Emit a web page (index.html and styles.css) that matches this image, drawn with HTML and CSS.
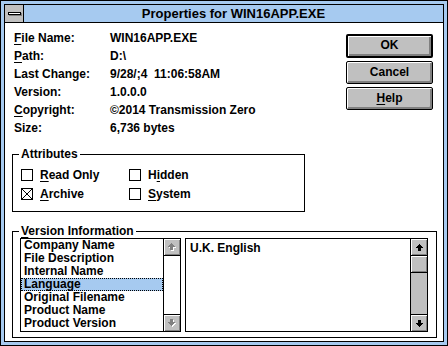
FILE: index.html
```html
<!DOCTYPE html>
<html lang="en">
<head>
    <meta charset="UTF-8">
    <title>Properties for WIN16APP.EXE</title>
    <link rel="stylesheet" href="styles.css">
</head>
<body>
    <div class="window">
        <div class="frame">
            <!-- caption -->
            <div class="titlebar">
                <div class="sysmenu"><span class="sysbar"></span></div>
                <div class="title">Properties for WIN16APP.EXE</div>
            </div>

            <div class="client">
                <div class="top">
                    <div class="info">
                        <span><u>F</u>ile Name:</span><span>WIN16APP.EXE</span>
                        <span><u>P</u>ath:</span><span>D:\</span>
                        <span>Last Change:</span><span>9/28/;4&nbsp;&nbsp;11:06:58AM</span>
                        <span>Version:</span><span>1.0.0.0</span>
                        <span><u>C</u>opyright:</span><span>&copy;2014 Transmission Zero</span>
                        <span>Size:</span><span>6,736 bytes</span>
                    </div>
                    <div class="buttons">
                        <div class="btn default">OK</div>
                        <div class="btn">Cancel</div>
                        <div class="btn"><u>H</u>elp</div>
                    </div>
                </div>

                <div class="group attributes">
                    <span class="group-label">Attributes</span>
                    <div class="checks">
                        <div class="check"><span class="box"></span><span><u>R</u>ead Only</span></div>
                        <div class="check"><span class="box"></span><span>H<u>i</u>dden</span></div>
                        <div class="check">
                            <span class="box">
                                <svg width="10" height="10" viewBox="0 0 10 10"><path d="M0 0L10 10M10 0L0 10" stroke="#000" stroke-width="1"/></svg>
                            </span><span><u>A</u>rchive</span>
                        </div>
                        <div class="check"><span class="box"></span><span><u>S</u>ystem</span></div>
                    </div>
                </div>

                <div class="group version">
                    <span class="group-label"><u>V</u>ersion Information</span>
                    <div class="lists">
                        <div class="listbox names">
                            <ul class="items">
                                <li>Company Name</li>
                                <li>File Description</li>
                                <li>Internal Name</li>
                                <li class="selected">Language</li>
                                <li>Original Filename</li>
                                <li>Product Name</li>
                                <li>Product Version</li>
                            </ul>
                            <div class="scrollbar off">
                                <div class="arrow">
                                    <svg width="8" height="8" viewBox="0 0 8 8"><path class="shade" d="M4 1h1v1h1v1h1v1h1v1H6v3H3V5H1V4h1V3h1V2h1z"/><path class="glyph" d="M3 0h1v1h1v1h1v1h1v1H5v3H2V4H0V3h1V2h1V1h1z"/></svg>
                                </div>
                                <div class="track"></div>
                                <div class="arrow">
                                    <svg width="8" height="8" viewBox="0 0 8 8"><path class="shade" d="M3 1h3v3h2v1H7v1H6v1H5v1H4V7H3V6H2V5H1V4h2z"/><path class="glyph" d="M2 0h3v3h2v1H6v1H5v1H4v1H3V6H2V5H1V4H0V3h2z"/></svg>
                                </div>
                            </div>
                        </div>
                        <div class="listbox value">
                            <div class="value-text">U.K. English</div>
                            <div class="scrollbar">
                                <div class="arrow">
                                    <svg width="7" height="7" viewBox="0 0 7 7"><path d="M3 0h1v1h1v1h1v1h1v1H5v3H2V4H0V3h1V2h1V1h1z"/></svg>
                                </div>
                                <div class="thumb"></div>
                                <div class="track grey"></div>
                                <div class="arrow">
                                    <svg width="7" height="7" viewBox="0 0 7 7"><path d="M2 0h3v3h2v1H6v1H5v1H4v1H3V6H2V5H1V4H0V3h2z"/></svg>
                                </div>
                            </div>
                        </div>
                    </div>
                </div>
            </div>
        </div>
    </div>
</body>
</html>
```

FILE: styles.css
```css
body {
    margin: 0;
    font-family: "Liberation Sans", Arial, sans-serif;
    font-size: 12px;
    font-weight: bold;
    color: #000;
}

u {
    text-underline-offset: 2px;
}

.window {
    width: 448px;
    height: 346px;
    box-sizing: border-box;
    border: 1px solid #000;
    background: #a6caf0;
    padding: 3px;
}

.frame {
    height: 100%;
    box-sizing: border-box;
    border: 1px solid #000;
    background: #fff;
    display: flex;
    flex-direction: column;
}

/* caption bar */
.titlebar {
    height: 17px;
    border-bottom: 1px solid #000;
    background: #a6caf0;
    display: flex;
}

.sysmenu {
    width: 18px;
    border-right: 1px solid #000;
    background: #c0c0c0;
    display: flex;
    align-items: center;
    justify-content: center;
}

.sysbar {
    width: 11px;
    height: 1px;
    border: 1px solid #000;
    background: #fff;
    box-shadow: 1px 1px 0 #808080;
}

.title {
    flex: 1;
    text-align: center;
    line-height: 17px;
    font-size: 13px;
}

.client {
    flex: 1;
    padding: 6px 6px 0 7px;
    display: flex;
    flex-direction: column;
}

.top {
    display: flex;
    justify-content: space-between;
    align-items: flex-start;
}

.info {
    display: grid;
    grid-template-columns: 96px auto;
    line-height: 18px;
    padding-left: 2px;
    white-space: nowrap;
}

.buttons {
    margin-top: 5px;
    margin-right: 4px;
    display: flex;
    flex-direction: column;
    gap: 3px;
}

.btn {
    width: 87px;
    height: 23px;
    box-sizing: border-box;
    border: 1px solid #000;
    border-radius: 2px;
    background: #c0c0c0;
    box-shadow: inset 1px 1px 0 #fff, inset -2px -2px 0 #808080;
    text-align: center;
    line-height: 20px;
}

.btn.default {
    height: 24px;
    border-width: 2px;
    line-height: 19px;
}

/* group boxes */
.group {
    position: relative;
    border: 1px solid #000;
}

.group-label {
    position: absolute;
    top: -8px;
    left: 6px;
    padding: 0 2px;
    background: #fff;
    line-height: 14px;
}

.attributes {
    width: 293px;
    box-sizing: border-box;
    margin-top: 17px;
    padding: 10px 0 8px 8px;
}

.checks {
    display: grid;
    grid-template-columns: 108px 108px;
    grid-auto-rows: 19px;
}

.check {
    display: flex;
    align-items: center;
    gap: 7px;
}

.box {
    width: 12px;
    height: 12px;
    box-sizing: border-box;
    border: 1px solid #000;
    display: flex;
}

.version {
    margin-top: 19px;
    padding: 6px 8px 5px 7px;
}

.lists {
    display: flex;
    gap: 4px;
}

.listbox {
    height: 94px;
    box-sizing: border-box;
    border: 1px solid #000;
    display: flex;
}

.names {
    width: 161px;
}

.value {
    flex: 1;
}

.items {
    list-style: none;
    margin: 0;
    padding: 0;
    flex: 1;
}

.items li {
    height: 13px;
    line-height: 13px;
    padding-left: 3px;
    box-sizing: border-box;
}

.items li.selected {
    background: #a6caf0;
    outline: 1px dotted #000;
    outline-offset: -1px;
}

.value-text {
    flex: 1;
    padding: 2px 4px;
    line-height: 14px;
}

/* scroll bars */
.scrollbar {
    width: 17px;
    box-sizing: border-box;
    border-left: 1px solid #000;
    display: flex;
    flex-direction: column;
}

.arrow,
.thumb {
    height: 16px;
    box-sizing: border-box;
    background: #c0c0c0;
    box-shadow: inset 1px 1px 0 #fff, inset -1px -1px 0 #808080;
    display: flex;
    align-items: center;
    justify-content: center;
}

.arrow:first-child,
.thumb {
    border-bottom: 1px solid #000;
    height: 17px;
}

.arrow:last-child {
    border-top: 1px solid #000;
    height: 17px;
}

.track {
    flex: 1;
    background: #fff;
}

.track.grey {
    background: #c0c0c0;
}

.off .shade {
    fill: #fff;
}

.off .glyph {
    fill: #808080;
}
```
